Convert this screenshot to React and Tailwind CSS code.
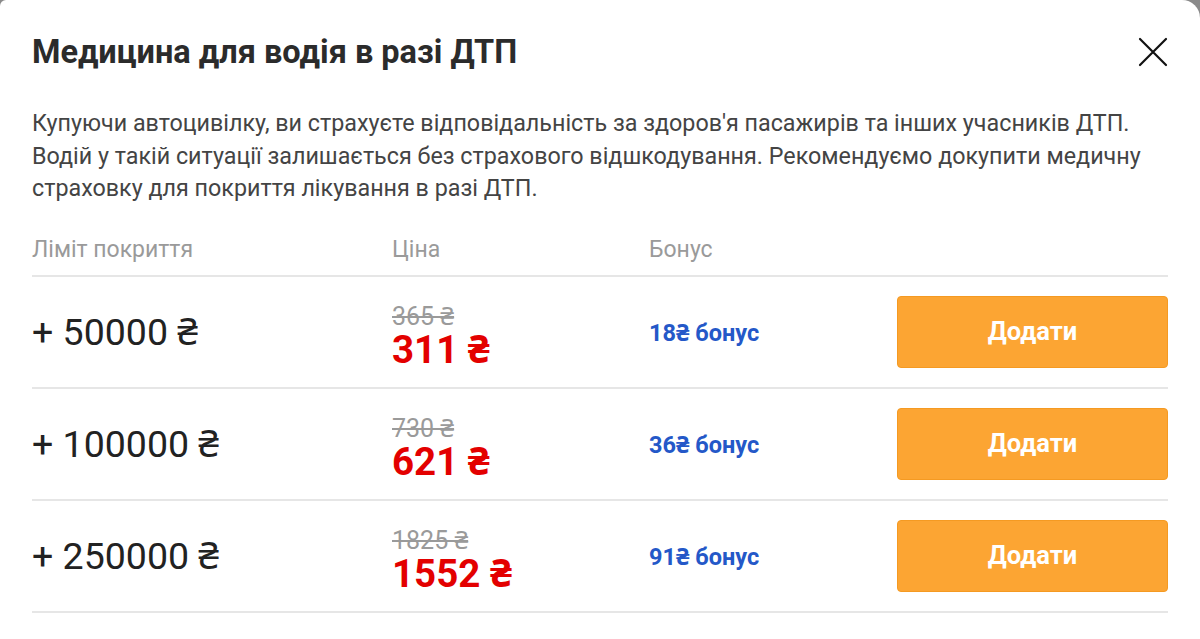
import React from "react";

const rows = [
  { limit: "+ 50000 ₴", old: "365 ₴", price: "311 ₴", bonus: "18₴ бонус" },
  { limit: "+ 100000 ₴", old: "730 ₴", price: "621 ₴", bonus: "36₴ бонус" },
  { limit: "+ 250000 ₴", old: "1825 ₴", price: "1552 ₴", bonus: "91₴ бонус" },
];

export default function App() {
  return (
    <div className="w-[1200px] h-[639px] bg-[#8a8a8a] overflow-hidden" style={{ fontFamily: "Roboto, 'Noto Sans', sans-serif" }}>
      <div className="w-full h-full bg-white rounded-tl-[6px] rounded-tr-[18px] px-8 pt-8">
        <div className="flex items-center justify-between h-10">
          <h1 className="text-[32.5px] leading-10 font-bold text-[#2b2b2b]">Медицина для водія в разі ДТП</h1>
          <button className="w-8 h-8 flex items-center justify-center -mr-[1px]">
            <svg width="30" height="30" viewBox="0 0 30 30" fill="none" stroke="#111" strokeWidth="2.2" strokeLinecap="round">
              <path d="M2 2 L28 28 M28 2 L2 28" />
            </svg>
          </button>
        </div>
        <p className="mt-[35px] text-[23.3px] leading-[32.5px] text-[#444]">
          Купуючи автоцивілку, ви страхуєте відповідальність за здоров'я пасажирів та інших учасників ДТП.<br />
          Водій у такій ситуації залишається без страхового відшкодування. Рекомендуємо докупити медичну<br />
          страховку для покриття лікування в разі ДТП.
        </p>
        <div className="mt-[29px] flex h-[43px] text-[23px] leading-8 text-[#9a9a9a]">
          <div className="w-[360px] border-b-2 border-[#e6e6e6]">Ліміт покриття</div>
          <div className="w-[257px] border-b-2 border-[#e6e6e6]">Ціна</div>
          <div className="w-[209px] border-b-2 border-[#e6e6e6]">Бонус</div>
          <div className="flex-1 border-b-2 border-[#e6e6e6]"></div>
        </div>
        {rows.map((r) => (
          <div key={r.limit} className="flex items-center h-[112px] border-b-2 border-[#e6e6e6]">
            <div className="w-[360px] text-[37.5px] leading-10 text-[#222]">{r.limit}</div>
            <div className="w-[257px] flex flex-col mt-[10px]">
              <span className="text-[25px] leading-[26px] text-[#9a9a9a] line-through">{r.old}</span>
              <span className="text-[38.5px] leading-[40px] font-bold text-[#e30000]">{r.price}</span>
            </div>
            <div className="w-[248px] text-[23.5px] leading-7 font-bold text-[#2458c8] mt-[3px]">{r.bonus}</div>
            <button className="flex-1 h-[72px] rounded-[4px] bg-[#fca533] border border-[#f59a22] text-white text-[25.5px] font-bold">
              Додати
            </button>
          </div>
        ))}
      </div>
    </div>
  );
}
